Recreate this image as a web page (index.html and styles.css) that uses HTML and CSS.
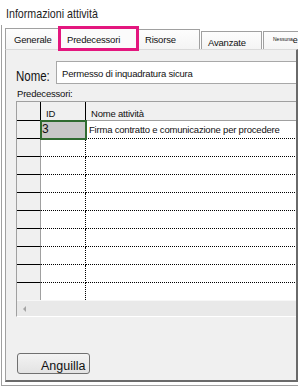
FILE: index.html
```html
<!DOCTYPE html>
<html lang="it">
<head>
  <meta charset="UTF-8">
  <meta name="viewport" content="width=device-width, initial-scale=1.0">
  <title>Informazioni attività</title>
  <link rel="stylesheet" href="styles.css">
</head>
<body>
  <div class="title"><span class="narrow">Informazioni attività</span></div>
  <div class="frame">
    <div class="tabs">
      <div class="tab tab-general">Generale</div>
      <div class="tab tab-selected">Predecessori</div>
      <div class="tab tab-resources">Risorse</div>
      <div class="tab tab-advanced">Avanzate</div>
      <div class="tab tab-notes"><span class="tiny">Nessuna</span><span class="cut">e</span></div>
    </div>
    <div class="panel">
      <div class="name-row">
        <label for="name" class="name-label"><span class="narrow">Nome:</span></label>
        <input type="text" id="name" class="name-input" value="Permesso di inquadratura sicura">
      </div>
      <div class="pred-label">Predecessori:</div>
      <div class="grid">
        <div class="row header">
          <div class="cell rowhead"></div>
          <div class="cell id">ID</div>
          <div class="cell task">Nome attività</div>
        </div>
        <div class="row">
          <div class="cell rowhead"></div>
          <div class="cell id selected">3</div>
          <div class="cell task">Firma contratto e comunicazione per procedere</div>
        </div>
        <div class="row"><div class="cell rowhead"></div><div class="cell id"></div><div class="cell task"></div></div>
        <div class="row"><div class="cell rowhead"></div><div class="cell id"></div><div class="cell task"></div></div>
        <div class="row"><div class="cell rowhead"></div><div class="cell id"></div><div class="cell task"></div></div>
        <div class="row"><div class="cell rowhead"></div><div class="cell id"></div><div class="cell task"></div></div>
        <div class="row"><div class="cell rowhead"></div><div class="cell id"></div><div class="cell task"></div></div>
        <div class="row"><div class="cell rowhead"></div><div class="cell id"></div><div class="cell task"></div></div>
        <div class="row"><div class="cell rowhead"></div><div class="cell id"></div><div class="cell task"></div></div>
        <div class="row"><div class="cell rowhead"></div><div class="cell id"></div><div class="cell task"></div></div>
        <div class="row last"><div class="cell rowhead"></div><div class="cell id"></div><div class="cell task"></div></div>
        <div class="hscroll"><span class="arrow-left"></span></div>
      </div>
      <button type="button" class="btn">Anguilla</button>
    </div>
  </div>
</body>
</html>
```
FILE: styles.css
```css
body {
  margin: 0;
  width: 298px;
  height: 387px;
  overflow: hidden;
  background-color: #fff;
  font-family: "Liberation Sans", Arial, sans-serif;
  color: #111;
}

/* the dialog font is narrower than Arial */
.narrow {
  display: inline-block;
  transform: scaleX(0.82);
  transform-origin: left center;
  white-space: nowrap;
}

.title {
  height: 25px;
  box-sizing: border-box;
  padding: 6px 0 0 6px;
  font-size: 13px;
  line-height: 15px;
  color: #1e1e1e;
}

.frame {
  margin-left: 1px;
  border-left: 1px solid #a0a0a0;
  border-bottom: 1px solid #a0a0a0;
  padding: 0 0 3px 3px;
}

/* tab strip */
.tabs {
  display: flex;
  align-items: flex-end;
  height: 24px;
}

.tab {
  box-sizing: border-box;
  border: 1px solid #a0a0a0;
  border-bottom: none;
  background: linear-gradient(#fdfdfd, #f4f4f4);
  font-size: 9.5px;
  letter-spacing: -0.2px;
  line-height: 11px;
  white-space: nowrap;
  overflow: hidden;
}

.tab-general {
  width: 53px;
  height: 21px;
  border-right: none;
  padding: 5px 0 0 8px;
}

.tab-selected {
  position: relative;
  z-index: 1;
  width: 81px;
  height: 25px;
  margin-bottom: -2px;
  border: 3px solid #e3167e;
  background: #fbfbfb;
  padding: 5px 0 0 6px;
}

.tab-resources {
  width: 61px;
  height: 20px;
  border-left: none;
  padding: 4px 0 0 6px;
}

.tab-advanced {
  width: 61px;
  height: 18px;
  margin-left: 1px;
  padding: 5px 0 0 6px;
}

.tab-notes {
  flex: 1;
  height: 18px;
  margin-left: 1px;
  border-right: none;
  padding: 2px 0 0 9px;
}

.tab-notes .tiny {
  font-size: 5px;
  letter-spacing: 0;
  vertical-align: top;
}

.tab-notes .cut {
  font-size: 9px;
  margin-left: 0;
}

/* panel */
.panel {
  height: 330px;
  overflow: hidden;
  background-color: #f0f0f0;
  border-top: 1px solid #dadada;
  border-left: 1px solid #a0a0a0;
  border-right: 2px solid #6a6a6a;
  border-bottom: 2px solid #6a6a6a;
}

.name-row {
  display: flex;
  margin-top: 11px;
  height: 23px;
  padding-left: 10px;
}

.name-label {
  align-self: flex-end;
  width: 40px;
  flex: none;
  font-size: 14px;
  line-height: 16px;
}

.name-input {
  flex: none;
  width: 260px;
  height: 23px;
  box-sizing: border-box;
  margin: 0;
  border: 1px solid #a8a8a8;
  border-right: none;
  border-radius: 0;
  padding: 1px 0 0 5px;
  background: #fff;
  font-family: "Liberation Sans", Arial, sans-serif;
  font-size: 9.5px;
  letter-spacing: -0.2px;
  color: #111;
  outline: none;
}

.pred-label {
  margin: 4px 0 0 11px;
  height: 12px;
  font-size: 9.5px;
  letter-spacing: -0.2px;
  line-height: 12px;
}

/* predecessors grid */
.grid {
  width: 300px;
  margin: 1px 0 0 10px;
  border-left: 1px solid #a0a0a0;
  border-top: 1px solid #a0a0a0;
  border-bottom: 1px solid #fff;
  font-size: 9.5px;
  letter-spacing: -0.2px;
}

.row {
  display: flex;
  height: 18px;
}

.cell {
  box-sizing: border-box;
  height: 18px;
  white-space: nowrap;
  line-height: 17px;
}

.rowhead {
  width: 24px;
  background-color: #f0f0f0;
  border-right: 1px solid #a0a0a0;
  border-bottom: 1px solid #000;
}

.id {
  width: 45px;
  background-color: #fff;
  border-right: 1px dotted #000;
  border-bottom: 1px dotted #000;
  padding-left: 1px;
}

.task {
  flex: 1;
  background-color: #fff;
  border-bottom: 1px dotted #000;
  padding-left: 3px;
}

.row.header {
  height: 19px;
}

.header .cell {
  height: 19px;
  background-color: #f0f0f0;
  border-bottom: 1px solid #a0a0a0;
  border-right: 1px solid #000;
  padding-top: 5px;
  line-height: 13px;
}

.header .rowhead {
  border-bottom-color: #000;
}

.header .id {
  padding-left: 5px;
}

.header .task {
  border-right: none;
  padding-left: 5px;
}

.id.selected {
  position: relative;
  background-color: #c8c8c8;
  outline: 2px solid #2f6b30;
  outline-offset: -1px;
  font-size: 12px;
  letter-spacing: 0;
}

.row.last,
.row.last .cell {
  height: 17px;
  border-bottom: none;
}

.hscroll {
  display: flex;
  align-items: center;
  height: 16px;
  box-sizing: border-box;
  border-top: 1px solid #f7f7f7;
  background-color: #e9e9e9;
  padding-left: 6px;
}

.arrow-left {
  width: 0;
  height: 0;
  border-top: 3px solid transparent;
  border-bottom: 3px solid transparent;
  border-right: 3px solid #a5a5a5;
}

.btn {
  display: block;
  width: 73px;
  height: 21px;
  box-sizing: border-box;
  margin: 36px 0 0 11px;
  padding: 6px 0 0 23px;
  border: 1px solid #707070;
  border-radius: 3px;
  background: linear-gradient(#f3f3f3, #e3e3e3);
  font-family: "Liberation Sans", Arial, sans-serif;
  font-size: 12.5px;
  line-height: 13px;
  text-align: left;
  color: #111;
  cursor: pointer;
}
```
